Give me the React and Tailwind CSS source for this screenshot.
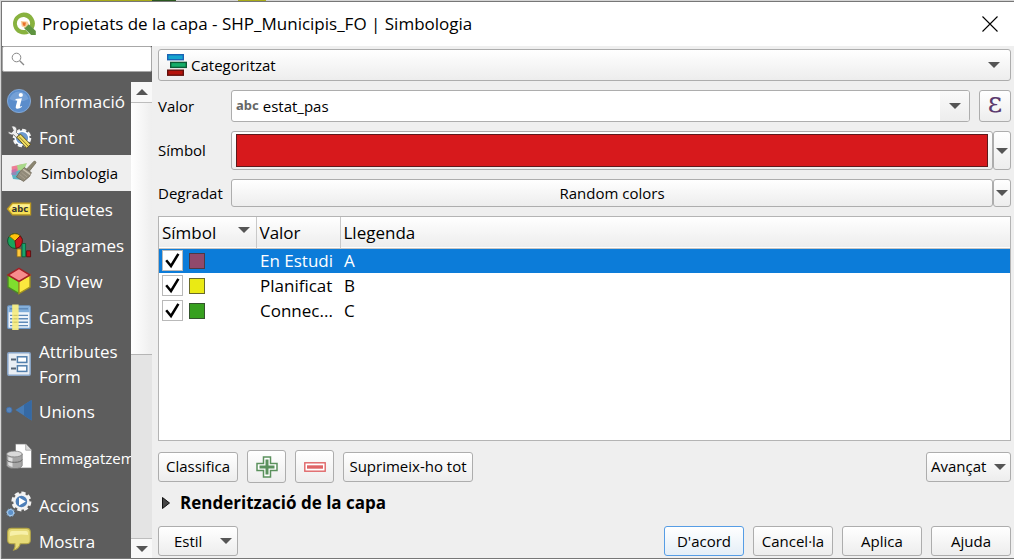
import React, { useState } from "react";

const ui = "font-['Open_Sans','Noto_Sans',sans-serif]";
const buttonBase =
  "rounded-[3px] border border-[#adadad] bg-gradient-to-b from-white to-[#ededed] text-black";

function Arrow() {
  return (
    <svg className="h-[6px] w-[12px] shrink-0" viewBox="0 0 12 6" aria-hidden="true">
      <path d="M0 0H12L6 6Z" fill="#555" />
    </svg>
  );
}

function QgisLogo() {
  return (
    <svg className="size-6 shrink-0" viewBox="0 0 24 24" aria-hidden="true">
      <path d="M11.5 .6A11 11 0 1 0 17 21.4L13.4 17.8A6.6 6.6 0 1 1 17.8 13.4L21.4 17A11 11 0 0 0 11.5 .6Z" fill="#88b23f" />
      <path d="M12.4 12.2L16.8 12.2L23.8 19V23H19.2L12.4 16.4Z" fill="#5f9440" />
      <path d="M8.8 9L15.4 9.6L16.8 12.2L13.2 15.8L9.8 14.6Z" fill="#f8cf9a" />
      <path d="M10.4 10.2L14 10.6L13.2 14L11 13.4Z" fill="#e8702a" />
    </svg>
  );
}

function InfoIcon() {
  return (
    <>
      <circle cx="12" cy="12" r="11.6" fill="#5b8dcb" stroke="#8cb0dd" strokeWidth=".8" />
      <path d="M2.5 10A9.8 9.8 0 0 1 21.5 10Q12 15 2.5 10Z" fill="#86addd" opacity=".6" />
      <circle cx="13.8" cy="6" r="2.1" fill="#fff" />
      <path d="M8.6 10L14.9 9.2L12.9 17Q12.7 18.2 14.6 17L15 17.8Q11.6 20.6 9.3 19.6Q8.3 19 8.9 17L10.3 11.7L8.5 11.3Z" fill="#fff" />
    </>
  );
}

function SourceIcon() {
  return (
    <>
      <circle cx="15" cy="13" r="7.8" fill="#6e9bd0" stroke="#f2f2f2" strokeWidth="3" strokeDasharray="4 2.1" />
      <circle cx="15" cy="13" r="6.8" fill="none" stroke="#fff" strokeWidth="1.4" />
      <path d="M.6 6.2L4.6 7.6L6.4 5.4L4.4 1.2Q8.6 .2 9.9 4L9.4 7.4L14 12L11 14.4L6.8 9.8Q2 10.6 .6 6.2Z" fill="#eee" stroke="#555" strokeWidth=".7" />
      <path d="M9.6 12L13.6 9.2L23.6 19.4L19.6 23.2Z" fill="#eedc62" stroke="#514716" strokeWidth=".9" />
      <path d="M12 11.6L21 21" stroke="#927d24" strokeWidth="1" />
    </>
  );
}

function BrushIcon() {
  return (
    <>
      <path d="M4.6 5.4L15 3.2L14 10L5 13Z" fill="#ee7f95" />
      <path d="M10 4.2L20 2L17 9L11 10Z" fill="#a9d98a" />
      <path d="M4.4 12L13 9L16 19L6 18Z" fill="#5cb3c4" />
      <path d="M4.6 9L9.6 7.4L9.4 14L4.4 14Z" fill="#b56cb0" opacity=".6" />
      <path d="M19.5 8.2L27 .2Q29 -.2 29 1.8L22.2 10.4Z" fill="#8b8570" stroke="#6a6450" strokeWidth=".7" />
      <path d="M12.6 11L17.4 6.6L24.4 11.6L22.6 15.4L16.6 20.4L9.4 16Z" fill="#918a79" stroke="#6a6252" strokeWidth=".7" />
      <path d="M16 8.2L23.4 13.6" stroke="#c8c0ae" strokeWidth="1.4" />
      <path d="M12.4 13.4L18 18M14.6 11.4L20 15.8" stroke="#b0a896" strokeWidth=".7" />
    </>
  );
}

function LabelIcon() {
  return (
    <>
      <path d="M.5 12L5.5 6.2H23.6V17.8H5.5Z" fill="#f6df55" stroke="#bd9a21" strokeWidth="1.2" />
      <path d="M3 11.2L6 7.6H22.4V10Z" fill="#fff4a2" opacity=".8" />
      <text x="4.6" y="15.4" fontSize="9.5" fontWeight="700" fill="#333" fontFamily="Noto Sans, sans-serif">abc</text>
    </>
  );
}

function DiagramIcon() {
  return (
    <>
      <circle cx="8" cy="8" r="7.4" fill="#18a45c" stroke="#144f2e" strokeWidth="1" />
      <path d="M8 8L2.4 3.2A7.4 7.4 0 0 1 13.2 2.8Z" fill="#ffc30b" stroke="#795c08" strokeWidth=".8" />
      <path d="M8 8L13.2 2.8A7.4 7.4 0 0 1 9 15.4Z" fill="#c9191e" stroke="#62090c" strokeWidth=".8" />
      <path d="M10 16H14V23.8H10Z" fill="#ffc83d" stroke="#8f6b15" strokeWidth=".8" />
      <path d="M15 10.5H18.6V23.8H15Z" fill="#18a46c" stroke="#0b5535" strokeWidth=".8" />
      <path d="M19.6 17.8H23.6V23.8H19.6Z" fill="#b91418" stroke="#570609" strokeWidth=".8" />
    </>
  );
}

function CubeIcon() {
  return (
    <>
      <path d="M1 6L12 12.4V24.6L1 18Z" fill="#7fdd2e" stroke="#4b8a26" strokeWidth="1.4" />
      <path d="M23 6L12 12.4V24.6L23 18Z" fill="#fbe83e" stroke="#a39320" strokeWidth="1.4" />
      <path d="M12 -.6L23 6L12 12.4L1 6Z" fill="#f68c8d" stroke="#a32025" strokeWidth="1.5" />
    </>
  );
}

function FieldsIcon() {
  return (
    <>
      <rect x=".8" y="1" width="22.4" height="22.4" rx="1" fill="#eef4fa" stroke="#6f9ac9" strokeWidth="1.3" />
      <path d="M1.5 1.6H22.6V7.2H1.5Z" fill="#80aedb" />
      <path d="M3 3.8H21M3 10.4H21M3 13.8H21M3 17.2H21M3 20.6H21" stroke="#608bb9" strokeWidth="1.4" />
      <rect x="5.2" y="-.5" width="6.4" height="25.5" fill="#f5ed84" opacity=".95" />
      <path d="M6.5 10.4H10.5M6.5 13.8H10.5M6.5 17.2H10.5" stroke="#cfc55f" strokeWidth="1" />
    </>
  );
}

function FormIcon() {
  return (
    <>
      <rect x=".8" y=".8" width="22.4" height="22.4" rx="1.2" fill="#e9eef4" stroke="#89a6c9" strokeWidth="1.5" />
      <rect x="10.4" y="4.8" width="9.4" height="5.6" fill="#fff" stroke="#527fac" strokeWidth="1.5" />
      <rect x="10.4" y="13.8" width="9.4" height="5.6" fill="#fff" stroke="#527fac" strokeWidth="1.5" />
      <path d="M4 7.5H9M4 16.5H9" stroke="#566474" strokeWidth="2.2" />
    </>
  );
}

function JoinIcon() {
  return (
    <>
      <circle cx="2.2" cy="11" r="2.9" fill="#5886bd" stroke="#3f699e" strokeWidth=".8" />
      <path d="M8.4 11L24.6 1V21.4Z" fill="#467bb5" />
      <path d="M17 5.7L24.6 1V21.4L17 16.6Z" fill="#3569a4" />
    </>
  );
}

function StorageIcon() {
  return (
    <>
      <path d="M8.5 -2H19L24.5 4V22H8.5Z" fill="#fff" stroke="#777" strokeWidth=".7" />
      <path d="M18.7 -2V4.2H24.5" fill="#ddd" stroke="#999" strokeWidth=".7" />
      <path d="M-.4 8V19.5Q.6 22.6 7.4 22.6T15.2 19.5V8Z" fill="#a6a6a6" stroke="#707070" strokeWidth=".7" />
      <path d="M1.3 11V19Q3 20.7 5.5 21V12Z" fill="#e0e0e0" />
      <ellipse cx="7.4" cy="8" rx="7.8" ry="2.9" fill="#d9d9d9" stroke="#777" strokeWidth=".7" />
      <path d="M-.4 13.5Q.6 16.3 7.4 16.3T15.2 13.5" fill="none" stroke="#666" strokeWidth="1" />
    </>
  );
}

function ActionIcon() {
  return (
    <>
      <circle cx="14.4" cy="8.5" r="8.6" fill="none" stroke="#f2f2f2" strokeWidth="2.8" strokeDasharray="4.2 2.5" />
      <circle cx="14.4" cy="8.5" r="7" fill="#4d7fb9" stroke="#f2f2f2" strokeWidth="2.4" />
      <path d="M12 4.4L18.8 8.5L12 12.6Z" fill="#fff" />
      <circle cx="3.6" cy="19.6" r="3.1" fill="#5d91ca" stroke="#a5c7e8" strokeWidth="1.2" />
      <circle cx="3.6" cy="19.6" r="4" fill="none" stroke="#7fa9d2" strokeWidth="1" strokeDasharray="1.5 1.5" />
    </>
  );
}

function DisplayIcon() {
  return (
    <>
      <path d="M4.5 -.6H19.5Q23.3 -.6 23.3 3.2V11Q23.3 14.8 19.5 14.8H13.2Q12 19.6 6.8 21Q8.6 18 8 14.8H4.5Q.7 14.8 .7 11V3.2Q.7 -.6 4.5 -.6Z" fill="#e7db78" stroke="#b5a747" strokeWidth="1.1" />
      <path d="M3 7V4Q3 2 5 2H19Q21 2 21 4V6Q12 4.5 3 7Z" fill="#f7f0a8" />
    </>
  );
}

const sections = [
  { name: "Informació", Icon: InfoIcon },
  { name: "Font", Icon: SourceIcon },
  { name: "Simbologia", Icon: BrushIcon, current: true },
  { name: "Etiquetes", Icon: LabelIcon },
  { name: "Diagrames", Icon: DiagramIcon },
  { name: "3D View", Icon: CubeIcon },
  { name: "Camps", Icon: FieldsIcon },
  { name: "Attributes Form", Icon: FormIcon, tall: true },
  { name: "Unions", Icon: JoinIcon },
  { name: "Emmagatzem", Icon: StorageIcon, tall: true, small: true },
  { name: "Accions", Icon: ActionIcon },
  { name: "Mostra", Icon: DisplayIcon },
];

function Section({ name, Icon, current, tall, small }) {
  return (
    <li>
      <a
        href="#"
        aria-current={current ? "page" : undefined}
        className={`flex items-center overflow-hidden pl-[5px] ${tall ? "h-[58px]" : "h-9"} ${
          current ? "gap-[10px] bg-[#efefef] text-[15px] text-black" : "gap-2 text-white"
        } ${small ? "text-[15px] whitespace-nowrap" : current ? "" : "text-[17px] leading-[25px]"}`}
      >
        <svg className="size-6 shrink-0 overflow-visible" viewBox="0 0 24 24" aria-hidden="true">
          <Icon />
        </svg>
        <span>{name}</span>
      </a>
    </li>
  );
}

function Sidebar() {
  return (
    <aside className="flex w-[150px] shrink-0 flex-col bg-[#5d5d5d]">
      <label className="flex h-[26px] shrink-0 items-center gap-1 rounded-[2px] border border-[#a8a8a8] bg-white px-2">
        <svg className="size-[14px] shrink-0" viewBox="0 0 14 14" fill="none" stroke="#888" aria-hidden="true">
          <circle cx="5.5" cy="5.5" r="4.3" />
          <path d="M8.7 8.7L13 13" strokeWidth="1.3" />
        </svg>
        <input type="search" aria-label="Cerca" className="w-full min-w-0 text-sm outline-none" />
      </label>
      <div className="flex min-h-0 flex-1 pt-[10px]">
        <ul className="min-w-0 flex-1 overflow-hidden pt-px">
          {sections.map((s) => (
            <Section key={s.name} {...s} />
          ))}
        </ul>
        <div className="flex w-[21px] shrink-0 flex-col bg-[#e4e4e4]">
          <button aria-label="Amunt" className="flex h-[21px] items-center justify-center border-b border-[#bdbdbd] bg-[#f8f8f8]">
            <span className="rotate-180"><Arrow /></span>
          </button>
          <div className="grow-[252] border-b border-[#b5b5b5] bg-gradient-to-r from-white to-[#eee]" />
          <div className="grow-[184]" />
          <button aria-label="Avall" className="flex h-5 items-center justify-center border-t border-[#bdbdbd] bg-[#f8f8f8]">
            <Arrow />
          </button>
        </div>
      </div>
    </aside>
  );
}

function CategoryIcon() {
  return (
    <svg className="h-[22px] w-5 shrink-0" viewBox="0 0 20 22" aria-hidden="true">
      <rect x=".7" y=".7" width="15.6" height="5" fill="#14a5cf" stroke="#1a63b5" strokeWidth="1.4" />
      <rect x="3.7" y="8.4" width="15.6" height="5" fill="#13ad68" stroke="#0c5a35" strokeWidth="1.4" />
      <rect x=".7" y="16.2" width="15.6" height="5" fill="#b5120b" stroke="#61100c" strokeWidth="1.4" />
    </svg>
  );
}

function DropButton({ label, size }) {
  return (
    <button aria-label={label} className={`flex w-[18px] shrink-0 items-center justify-center ${size} ${buttonBase}`}>
      <Arrow />
    </button>
  );
}

const initialCategories = [
  { value: "En Estudi", legend: "A", color: "bg-[#91496b]", selected: true },
  { value: "Planificat", legend: "B", color: "bg-[#eaea14]" },
  { value: "Connec...", legend: "C", color: "bg-[#37a01f]" },
];

function CategoryRow({ row }) {
  const [checked, setChecked] = useState(true);
  return (
    <tr className={`h-[25px] ${row.selected ? "bg-[#0c7cd9] text-white" : "text-black"}`}>
      <td className="p-0 pl-[3px]">
        <div className="flex items-center gap-[6px]">
          <span className="relative size-[21px]">
            <input
              type="checkbox"
              aria-label={row.value}
              checked={checked}
              onChange={() => setChecked(!checked)}
              className="peer block size-[21px] appearance-none border border-[#b9b9b9] bg-white"
            />
            <svg className="pointer-events-none absolute inset-0 hidden size-[21px] peer-checked:block" viewBox="0 0 21 21" fill="none" stroke="#000" strokeWidth="2.5" aria-hidden="true">
              <path d="M4.2 10.2L9 16L16.4 3.8" />
            </svg>
          </span>
          <span className={`size-4 border border-[#333]/70 ${row.color}`} />
        </div>
      </td>
      <td className="p-0 pl-1">{row.value}</td>
      <td className="p-0 pl-1">{row.legend}</td>
    </tr>
  );
}

function CategoryTable() {
  return (
    <div className="mt-[9px] min-h-0 flex-1 overflow-hidden border border-[#b4b4b4] bg-white">
      <table className="w-full table-fixed border-collapse text-left text-[17px] leading-6">
        <thead>
          <tr className="h-[31px] border-b border-[#c4c4c4] bg-gradient-to-b from-white to-[#ededed]">
            <th className="w-[97px] border-r border-[#c9c9c9] p-0 pt-[2px] pl-[3px] font-normal">
              <div className="flex items-start justify-between pr-[6px]">
                Símbol
                <span className="flex pt-[6px]"><Arrow /></span>
              </div>
            </th>
            <th className="w-[84px] border-r border-[#c9c9c9] p-0 pt-[2px] pl-[3px] font-normal">Valor</th>
            <th className="p-0 pt-[2px] pl-[3px] font-normal">Llegenda</th>
          </tr>
        </thead>
        <tbody>
          {initialCategories.map((row) => (
            <CategoryRow key={row.value} row={row} />
          ))}
        </tbody>
      </table>
    </div>
  );
}

function SymbologyPanel() {
  return (
    <main className="flex min-w-0 flex-1 flex-col pt-[3px] pr-[3px] pb-[2px] pl-[6px]">
      <div className={`flex h-8 shrink-0 items-center gap-1 pr-[10px] pl-2 ${buttonBase}`}>
        <CategoryIcon />
        <select aria-label="Tipus de simbologia" className="h-full min-w-0 flex-1 appearance-none bg-transparent outline-none">
          <option>Categoritzat</option>
        </select>
        <Arrow />
      </div>

      <div className="mt-[9px] flex h-8 shrink-0 items-center">
        <label htmlFor="value" className="w-[73px] shrink-0">Valor</label>
        <div className="flex h-full min-w-0 flex-1 items-center overflow-hidden rounded-[3px] border border-[#adadad] bg-white pl-1">
          <span className="mr-1 pb-[2px] font-['Noto_Sans',sans-serif] text-[13px] leading-4 font-bold text-[#666]">abc</span>
          <select id="value" className="h-full min-w-0 flex-1 appearance-none bg-transparent outline-none">
            <option>estat_pas</option>
          </select>
          <span className="flex h-full w-[29px] items-center justify-center bg-gradient-to-b from-[#fafafa] to-[#ededed]"><Arrow /></span>
        </div>
        <button aria-label="Expressió" className={`ml-[9px] flex h-full w-8 items-center justify-center ${buttonBase}`}>
          <span className="pb-[6px] font-['DejaVu_Serif',serif] text-[28px] leading-6 text-[#5b3a6e]">ε</span>
        </button>
      </div>

      <div className="mt-[9px] flex h-[39px] shrink-0 items-center">
        <label htmlFor="symbol" className="w-[73px] shrink-0">Símbol</label>
        <button id="symbol" className={`flex h-full min-w-0 flex-1 py-[2px] pr-1 pl-1 ${buttonBase}`}>
          <span className="h-full w-full border border-[#5c1a1c] bg-[#d7191c]" />
        </button>
        <DropButton label="Opcions del símbol" size="h-[39px]" />
      </div>

      <div className="mt-[9px] flex h-7 shrink-0 items-center">
        <label htmlFor="ramp" className="w-[73px] shrink-0">Degradat</label>
        <button id="ramp" className={`h-full min-w-0 flex-1 ${buttonBase}`}>Random colors</button>
        <DropButton label="Opcions del degradat" size="h-7" />
      </div>

      <CategoryTable />

      <div className="mt-[9px] flex shrink-0 items-center gap-[9px]">
        <button className={`h-[30px] w-20 ${buttonBase}`}>Classifica</button>
        <button aria-label="Afegeix" className={`flex h-[33px] w-[39px] items-center justify-center ${buttonBase}`}>
          <svg className="size-[22px]" viewBox="0 0 22 22" aria-hidden="true">
            <path d="M7.5 1H14.5V7.5H21V14.5H14.5V21H7.5V14.5H1V7.5H7.5Z" fill="#fff" stroke="#5b915d" strokeWidth="1.5" />
            <path d="M11 3.5V18.5M3.5 11H18.5" stroke="#5b915d" strokeWidth="3" />
          </svg>
        </button>
        <button aria-label="Suprimeix" className={`flex h-[33px] w-[39px] items-center justify-center ${buttonBase}`}>
          <svg className="h-[10px] w-[22px]" viewBox="0 0 22 10" aria-hidden="true">
            <rect x=".8" y=".8" width="20.4" height="8.4" fill="#fff" stroke="#df6466" strokeWidth="1.4" />
            <path d="M3 5H19" stroke="#df6466" strokeWidth="3.4" />
          </svg>
        </button>
        <button className={`h-[30px] w-[130px] whitespace-nowrap ${buttonBase}`}>Suprimeix-ho tot</button>
        <button className={`ml-auto flex h-[30px] w-[85px] items-center justify-between px-[4px] ${buttonBase}`}>
          Avançat <Arrow />
        </button>
      </div>

      <button className="mt-2 flex h-6 shrink-0 items-center gap-[10px] pl-1 text-left text-[17px] font-bold">
        <svg className="h-3 w-2" viewBox="0 0 8 12" aria-hidden="true">
          <path d="M.5.5L7.5 6L.5 11.5Z" fill="#444" stroke="#111" />
        </svg>
        Renderització de la capa
      </button>

      <div className="mt-[11px] flex shrink-0 items-center gap-[9px]">
        <button className={`mr-auto flex h-[30px] w-20 items-center justify-between pr-[5px] pl-[15px] ${buttonBase}`}>
          Estil <Arrow />
        </button>
        <button className="h-[30px] w-20 rounded-[3px] border border-[#569de5] bg-gradient-to-b from-white to-[#e4eef7]">D'acord</button>
        <button className={`h-[30px] w-20 ${buttonBase}`}>Cancel·la</button>
        <button className={`h-[30px] w-20 ${buttonBase}`}>Aplica</button>
        <button className={`h-[30px] w-20 ${buttonBase}`}>Ajuda</button>
      </div>
    </main>
  );
}

export default function App() {
  return (
    <div className={`flex h-screen flex-col overflow-hidden bg-[#d5d5d5] text-[15px] text-black ${ui}`}>
      <div className="flex h-px shrink-0" aria-hidden="true">
        <span className="w-20" />
        <span className="w-[72px] bg-[#a9ab18]" />
        <span className="w-6 bg-[#29571f]" />
        <span className="w-[62px]" />
        <span className="w-7 bg-[#a9ab18]" />
      </div>
      <div className="ml-px flex min-h-0 flex-1 flex-col border-y border-l border-[#777] bg-[#efefef]">
        <header className="flex h-11 shrink-0 items-center gap-[6px] bg-white pr-4 pl-[10px]">
          <QgisLogo />
          <h1 className="flex-1 text-[17px] whitespace-nowrap">Propietats de la capa - SHP_Municipis_FO | Simbologia</h1>
          <button aria-label="Tanca" className="flex size-4 items-center justify-center">
            <svg className="size-4" viewBox="0 0 16 16" stroke="#000" strokeWidth="1.1" aria-hidden="true">
              <path d="M.5.5L15.5 15.5M15.5.5L.5 15.5" />
            </svg>
          </button>
        </header>
        <div className="flex min-h-0 flex-1">
          <Sidebar />
          <SymbologyPanel />
        </div>
      </div>
    </div>
  );
}
